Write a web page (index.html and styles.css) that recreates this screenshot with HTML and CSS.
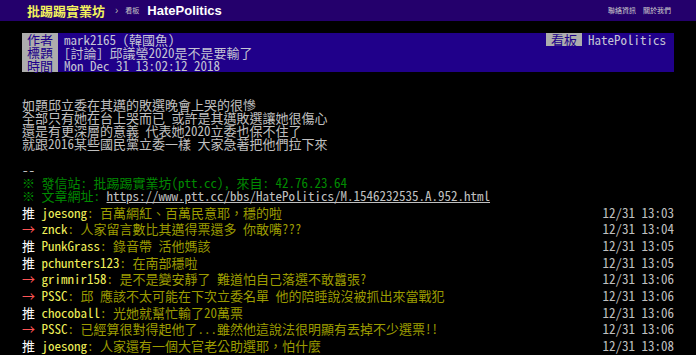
FILE: index.html
```html
<!DOCTYPE html>
<html lang="zh-Hant">
<head>
  <meta charset="UTF-8" />
  <meta name="viewport" content="width=device-width, initial-scale=1.0"/>
  <title>[討論] 邱議瑩2020是不是要輸了 - 看板 HatePolitics - 批踢踢實業坊</title>
  <link rel="stylesheet" href="styles.css">
</head>
<body>
  <div id="topbar">
    <a class="logo" href="#">批踢踢實業坊</a>
    <span class="sep">›</span>
    <span class="board-label">看板</span>
    <a class="board" href="#">HatePolitics</a>
    <div class="links">
      <a href="#">聯絡資訊</a>
      <a href="#">關於我們</a>
    </div>
  </div>

  <div id="main-content">
    <div class="meta">
      <div class="metaline">
        <span class="meta-tag">作者</span><span class="meta-value">mark2165 (韓國魚)</span>
        <div class="metaline-right">
          <span class="meta-tag">看板</span><span class="meta-value">HatePolitics</span>
        </div>
      </div>
      <div class="metaline">
        <span class="meta-tag">標題</span><span class="meta-value">[討論] 邱議瑩2020是不是要輸了</span>
      </div>
      <div class="metaline">
        <span class="meta-tag">時間</span><span class="meta-value">Mon Dec 31 13:02:12 2018</span>
      </div>
    </div>

<div class="text">如題邱立委在其邁的敗選晚會上哭的很慘
全部只有她在台上哭而已 或許是其邁敗選讓她很傷心
還是有更深層的意義 代表她2020立委也保不住了
就跟2016某些國民黨立委一樣 大家急著把他們拉下來

--
<span class="f2">※ 發信站: 批踢踢實業坊(ptt.cc), 來自: 42.76.23.64</span>
<span class="f2">※ 文章網址: </span><a class="url" href="#">https://www.ptt.cc/bbs/HatePolitics/M.1546232535.A.952.html</a></div>

    <div class="pushes">
      <div class="push"><span class="push-tag">推 </span><span class="push-userid">joesong</span><span class="push-content">: 百萬網紅、百萬民意耶，穩的啦</span><span class="push-time">12/31 13:03</span></div>
      <div class="push"><span class="push-tag arrow">→ </span><span class="push-userid">znck</span><span class="push-content">: 人家留言數比其邁得票還多 你敢嘴???</span><span class="push-time">12/31 13:04</span></div>
      <div class="push"><span class="push-tag">推 </span><span class="push-userid">PunkGrass</span><span class="push-content">: 錄音帶 活他媽該</span><span class="push-time">12/31 13:05</span></div>
      <div class="push"><span class="push-tag">推 </span><span class="push-userid">pchunters123</span><span class="push-content">: 在南部穩啦</span><span class="push-time">12/31 13:05</span></div>
      <div class="push"><span class="push-tag arrow">→ </span><span class="push-userid">grimnir158</span><span class="push-content">: 是不是變安靜了 難道怕自己落選不敢囂張?</span><span class="push-time">12/31 13:06</span></div>
      <div class="push"><span class="push-tag arrow">→ </span><span class="push-userid">PSSC</span><span class="push-content">: 邱 應該不太可能在下次立委名單 他的陪睡說沒被抓出來當戰犯</span><span class="push-time">12/31 13:06</span></div>
      <div class="push"><span class="push-tag">推 </span><span class="push-userid">chocoball</span><span class="push-content">: 光她就幫忙輸了20萬票</span><span class="push-time">12/31 13:06</span></div>
      <div class="push"><span class="push-tag arrow">→ </span><span class="push-userid">PSSC</span><span class="push-content">: 已經算很對得起他了...雖然他這說法很明顯有丟掉不少選票!!</span><span class="push-time">12/31 13:06</span></div>
      <div class="push"><span class="push-tag">推 </span><span class="push-userid">joesong</span><span class="push-content">: 人家還有一個大官老公助選耶，怕什麼</span><span class="push-time">12/31 13:08</span></div>
    </div>
  </div>
</body>
</html>
```

FILE: styles.css
```css
* {
  padding: 0;
  margin: 0;
}
body {
  background-color: #000;
  color: #c0c0c0;
  font-family: "Noto Sans Mono CJK TC", "DejaVu Sans Mono", "Noto Sans CJK TC", monospace;
  font-size: 13px;
  line-height: 13px;
  overflow: hidden;
}
a {
  color: inherit;
  text-decoration: none;
}

#topbar {
  height: 21px;
  background-color: #24006c;
  display: flex;
  align-items: center;
  padding: 0 25px 0 27px;
  font-family: "Liberation Sans", "Noto Sans CJK TC", sans-serif;
}
#topbar .logo {
  color: #f2f25c;
  font-weight: bold;
  font-size: 13px;
  font-family: "Noto Sans CJK TC", sans-serif;
}
#topbar .sep {
  color: #b0b0b0;
  font-size: 10px;
  margin: 0 0 0 10px;
}
#topbar .board-label {
  color: #c8c8c8;
  font-size: 7px;
  margin-left: 7px;
  font-family: "Noto Sans CJK TC", sans-serif;
}
#topbar .board {
  color: #fff;
  font-weight: bold;
  font-size: 13px;
  margin-left: 8px;
}
#topbar .links {
  margin-left: auto;
  display: flex;
  gap: 7px;
  font-size: 7px;
  color: #d0d0d0;
  font-family: "Noto Sans CJK TC", sans-serif;
}

#main-content {
  padding: 12px 22px 0 22px;
}

.meta {
  background-color: #20008a;
}
.metaline {
  display: flex;
  height: 13px;
}
.meta-tag {
  background-color: #adadad;
  color: #20008a;
  padding: 0 5px;
}
.meta-value {
  color: #c4c4d4;
  padding: 0 6px;
}
.metaline-right {
  margin-left: auto;
  display: flex;
  padding-right: 2px;
}

.text {
  white-space: pre;
  margin-top: 26px;
}
.f2 {
  color: #008a00;
}
.url {
  text-decoration: underline;
  color: #c0c0c0;
}

.pushes {
  padding-top: 2px;
}
.push {
  display: flex;
  height: 16.67px;
  align-items: center;
  white-space: pre;
}
.push-tag {
  color: #fff;
}
.push-tag.arrow {
  color: #ff5555;
}
.push-userid {
  color: #f0f05a;
}
.push-content {
  color: #9c9c00;
}
.push-time {
  margin-left: auto;
  color: #c0c0c0;
}
```
